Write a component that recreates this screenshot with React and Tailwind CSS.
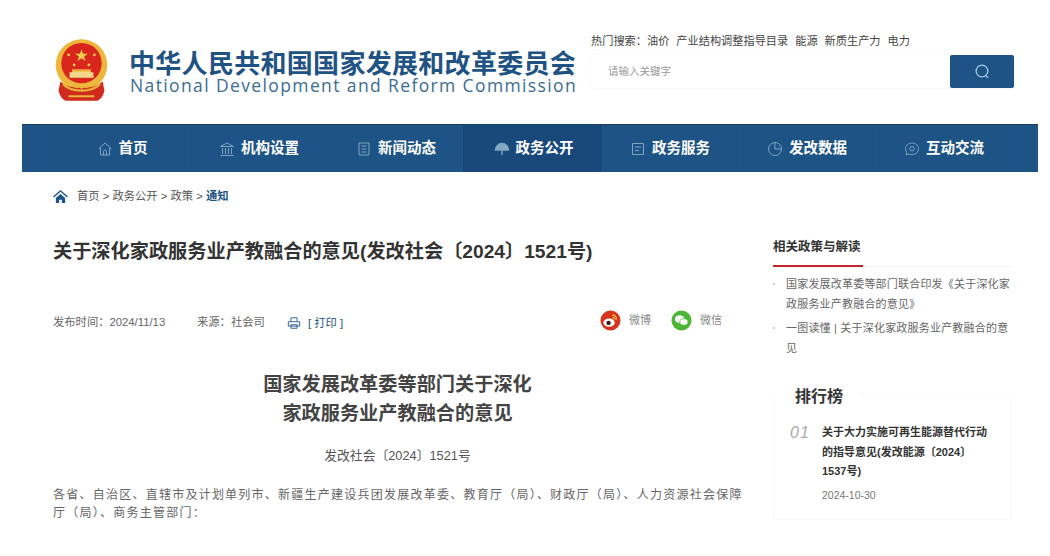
import React from "react";

const iconCls = "w-[16px] h-[16px] text-[#7fa5c2]";
const I = ({ children }) => (
  <svg viewBox="0 0 16 16" fill="none" stroke="currentColor" strokeWidth="1" className={iconCls}>{children}</svg>
);
const nav = [
  ["首页", "w-[167px] pl-[34px]", <I><path d="M1.500 8 8 2l6.500 6M3.500 7v7h9V7M6.500 14v-3.500a1.500 1.500 0 0 1 3 0V14" /></I>],
  ["机构设置", "w-[137px] pl-[4px]", <I><path d="M1.500 5.500 8 2l6.500 3.500zM3.500 7v6M6.500 7v6M9.500 7v6M12.500 7v6M1.500 14.500h13" /></I>],
  ["新闻动态", "w-[137px] pl-[4px]", <I><path d="M3 2h10v12H3zM5.500 5h5M5.500 8h5M5.500 11h5" /></I>],
  ["政务公开", "w-[140px] pl-[2px] bg-[#19497a]", <I><path d="M1.500 9a6.500 6.500 0 0 1 13 0zM8 2.500V14M5 9c0-3 1.200-5 3-6.500C9.800 4 11 6 11 9" strokeWidth="1.400" fill="#8db0ca" /></I>],
  ["政务服务", "w-[137px] pr-[2px]", <I><path d="M2.500 2.500h11v11h-11zM5 6h6M5 9.500h4" /></I>],
  ["发改数据", "w-[137px] pr-[2px]", <I><circle cx="8" cy="8" r="6.500" /><path d="M8 1.500V8h6.500" /></I>],
  ["互动交流", "w-[137px] pr-[2px]", <I><path d="M8 2c3.800 0 6.500 2.500 6.500 5.700S11.800 13.500 8 13.500c-1 0-2-.2-2.800-.5L2 14l.8-2.600C2 10.500 1.500 9.200 1.500 7.700 1.500 4.500 4.200 2 8 2z" /><circle cx="8" cy="7.700" r="2.200" /></I>],
];

const Logo = () => (
  <svg viewBox="0 0 62 70" className="w-[57px] h-[65px] shrink-0">
    <circle cx="31" cy="29" r="28" fill="#ecb73a" />
    <circle cx="31" cy="27" r="22" fill="#d9261c" />
    <path d="M31 12l1.600 4.800H38l-4.200 3 1.600 4.800-4.400-3-4.400 3 1.600-4.800-4.200-3h5.400z" fill="#f5cf4c" />
    <circle cx="17" cy="18" r="1.500" fill="#f5cf4c" />
    <circle cx="45" cy="18" r="1.500" fill="#f5cf4c" />
    <circle cx="23" cy="29" r="1.500" fill="#f5cf4c" />
    <circle cx="39" cy="29" r="1.500" fill="#f5cf4c" />
    <path d="M21 34h20v3h3v6H18v-6h3z" fill="#f2d68a" />
    <path d="M21 34h20v2H21z" fill="#e9a92e" />
    <path d="M8 47c5 5 13 7 23 7s18-2 23-7l2 10c-2 7-5 11-10 11H16C11 68 8 64 6 57z" fill="#cf2a1e" />
    <path d="M11 50c5 5 11 7 20 7s15-2 20-7M17 63h28" stroke="#ecb73a" strokeWidth="2.400" fill="none" />
    <path d="M25 54c2-3 4-3 6 0 2-3 4-3 6 0" stroke="#ecb73a" strokeWidth="2" fill="none" />
  </svg>
);

const Weibo = () => (
  <svg viewBox="0 0 22 22" className="w-[21px] h-[21px]">
    <circle cx="11" cy="11" r="10.500" fill="#d8341d" />
    <ellipse cx="9.500" cy="13.300" rx="6" ry="4.300" fill="#fff" />
    <circle cx="9" cy="13.500" r="2.300" fill="#3a1a14" />
    <path d="M13 5.500c2.500-.4 4.500 1.500 3.900 4.200M13.300 7.800c1-.2 1.800.6 1.500 1.700" stroke="#f7d24f" strokeWidth="1.200" fill="none" strokeLinecap="round" />
  </svg>
);

const Wechat = () => (
  <svg viewBox="0 0 22 22" className="w-[21px] h-[21px]">
    <circle cx="11" cy="11" r="10.500" fill="#4cb533" />
    <ellipse cx="9" cy="9.500" rx="5" ry="4" fill="#fff" />
    <ellipse cx="13.500" cy="12.500" rx="4.300" ry="3.400" fill="#fff" stroke="#4cb533" strokeWidth=".8" />
  </svg>
);

export default function App() {
  return (
    <div className="w-[1050px] h-[556px] overflow-hidden bg-white text-[#333] font-['Liberation_Sans','Noto_Sans_CJK_SC',sans-serif]">
      <header className="h-[124px] flex pl-[53px]">
        <div className="flex items-start pt-[38px] gap-[20px] w-[538px]">
          <Logo />
          <div className="pt-[13px] w-[450px] text-[#1f5384]">
            <div className="text-[26px] leading-[26px] font-bold tracking-[0.3px] whitespace-nowrap -ml-[1px]">中华人民共和国国家发展和改革委员会</div>
            <div className="text-[17.500px] leading-[16px] tracking-[1.380px] whitespace-nowrap font-['Open_Sans',sans-serif] text-[#3b6c93]">National Development and Reform Commission</div>
          </div>
        </div>
        <div className="pt-[34px] w-[423px]">
          <div className="text-[11.200px] leading-[14px] text-[#444] flex gap-[7px] whitespace-nowrap">
            <span>热门搜索：油价</span><span>产业结构调整指导目录</span><span>能源</span><span>新质生产力</span><span>电力</span>
          </div>
          <div className="flex h-[33px] mt-[7px] shadow-[0_0_3px_rgba(0,0,0,0.06)] rounded-[2px]">
            <div className="flex-1 pl-[17px] flex items-center text-[10.500px] text-[#999]">请输入关键字</div>
            <div className="w-[64px] bg-[#1d5385] rounded-[2px] flex items-center justify-center">
              <svg viewBox="0 0 16 16" fill="none" stroke="#a8cfe6" strokeWidth="1.200" className="w-[17px] h-[17px]"><circle cx="7.500" cy="7.500" r="5.500" /><path d="M11 12l2.500 2" /></svg>
            </div>
          </div>
        </div>
      </header>

      <nav className="mx-[22px] w-[1016px] h-[48px] bg-[#1d5385] border-t border-[#163f66] flex">
        {nav.map(([t, cls, ic]) => (
          <div key={t} className={`${cls} border-r border-[#205788] flex items-center justify-center gap-[5px]`}>
            {ic}
            <span className="text-[14.500px] font-bold text-white whitespace-nowrap ml-[1px]">{t}</span>
          </div>
        ))}
      </nav>

      <div className="pl-[53px] h-[48px] flex items-center gap-[9px] text-[11.300px] text-[#555]">
        <svg viewBox="0 0 16 14" className="w-[15px] h-[13px] fill-[#1d5385]"><path d="M8 0 0 7l1 1 7-6 7 6 1-1zM3 8.500V14h3.500v-3.500h3V14H13V8.500L8 4.300z" /></svg>
        <div>首页 &gt; 政务公开 &gt; 政策 &gt; <span className="font-bold text-[#1d5385]">通知</span></div>
      </div>

      <main className="flex pl-[53px]">
        <div className="w-[689px]">
          <h1 className="mt-[19px] text-[19.200px] leading-[26px] font-bold whitespace-nowrap text-[#333]">关于深化家政服务业产教融合的意见(发改社会〔2024〕1521号)</h1>
          <div className="mt-[43px] h-[28px] flex items-center text-[11.300px] text-[#666]">
            <span className="w-[144px]">发布时间：2024/11/13</span>
            <span className="w-[90px]">来源：社会司</span>
            <svg viewBox="0 0 16 16" fill="none" stroke="#1d5385" strokeWidth="1" className="w-[14px] h-[14px] mt-[2px]"><path d="M4.500 6V2h7v4M1.500 6.500h13v5h-13zM4.500 10h7v4h-7z" /></svg>
            <span className="ml-[7px] text-[#1d5385] mt-[2px]">[ 打印 ]</span>
            <div className="ml-auto mr-[20px] flex items-center -mt-[3px] text-[11px]">
              <Weibo /><span className="ml-[8px] text-[#888]">微博</span>
              <span className="ml-[20px]"><Wechat /></span><span className="ml-[8px] text-[#888]">微信</span>
            </div>
          </div>
          <div className="mt-[34px] text-center text-[19.200px] leading-[29px] font-bold text-[#444]">国家发展改革委等部门关于深化<br />家政服务业产教融合的意见</div>
          <div className="mt-[19px] text-center text-[12.800px] leading-[18px] text-[#555]">发改社会〔2024〕1521号</div>
          <p className="mt-[21px] -mr-[4px] text-[12px] leading-[18px] tracking-[1.240px] text-[#666]">各省、自治区、直辖市及计划单列市、新疆生产建设兵团发展改革委、教育厅（局）、财政厅（局）、人力资源社会保障厅（局）、商务主管部门：</p>
        </div>

        <aside className="ml-[31px] w-[239px]">
          <div className="mt-[15px] border-b border-[#f2f2f2] h-[32px]">
            <div className="w-[90px] h-[32px] border-b-2 border-[#c4262e] pt-[2px] text-[12.500px] font-bold leading-[20px] text-[#333] whitespace-nowrap">相关政策与解读</div>
          </div>
          <ul className="mt-[8px] w-[238px] text-[11px] leading-[19.500px] tracking-[0.200px] text-[#666]">
            <li className="relative pl-[13px]"><span className="absolute left-0 top-[8px] w-[2px] h-[2px] bg-[#ccc]"></span>国家发展改革委等部门联合印发《关于深化家政服务业产教融合的意见》</li>
            <li className="relative pl-[13px] mt-[5px]"><span className="absolute left-0 top-[8px] w-[2px] h-[2px] bg-[#ccc]"></span>一图读懂 | 关于深化家政服务业产教融合的意见</li>
          </ul>
          <div className="mt-[35px] border border-[#f8f8f8] relative h-[127px] pl-[48px] pt-[29px]">
            <div className="absolute left-[3px] -top-[8px] px-[18px] bg-white text-[16px] font-bold leading-[22px] text-[#333]">排行榜</div>
            <div className="absolute left-[16px] top-[30px] text-[16px] italic text-[#aaa] leading-[18px] tracking-[1px]">01</div>
            <div className="text-[11px] font-bold leading-[19.500px] text-[#333] w-[172px]">关于大力实施可再生能源替代行动的指导意见(发改能源〔2024〕1537号)</div>
            <div className="mt-[4px] text-[10.500px] text-[#777] leading-[18px]">2024-10-30</div>
          </div>
        </aside>
      </main>
    </div>
  );
}
